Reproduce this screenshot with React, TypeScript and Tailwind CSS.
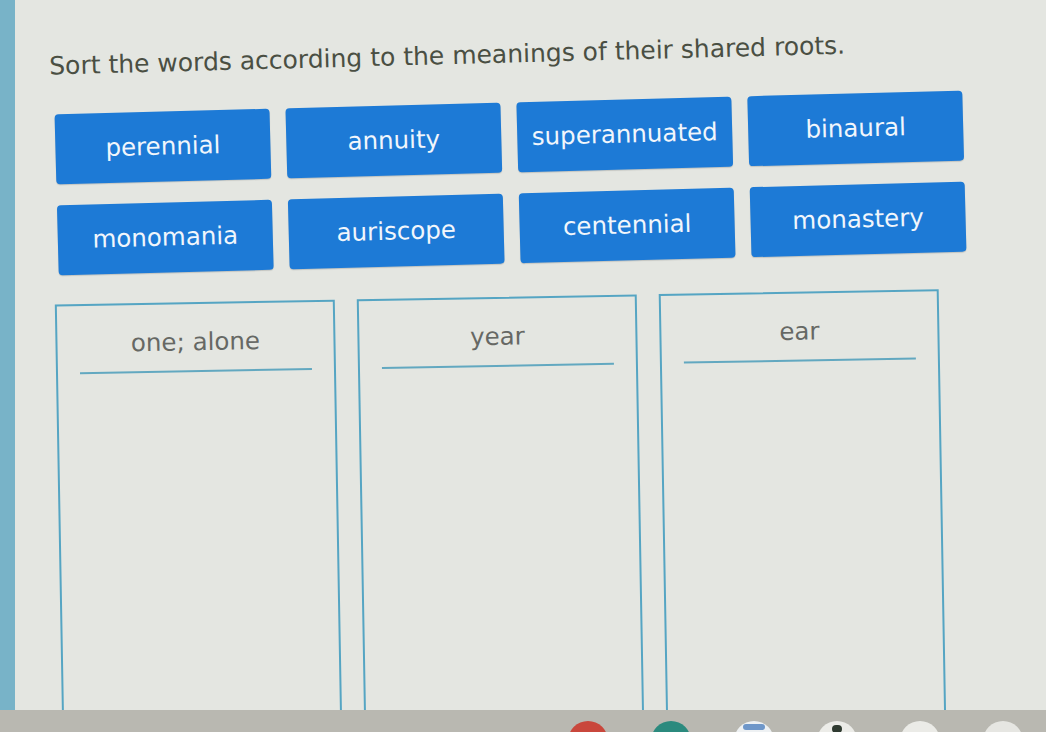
const WORDS = [
  "perennial",
  "annuity",
  "superannuated",
  "binaural",
  "monomania",
  "auriscope",
  "centennial",
  "monastery",
];

const ROOTS = ["one; alone", "year", "ear"];

export default function App() {
  return (
    <div className="flex h-screen flex-col overflow-hidden bg-[#e4e6e1] font-['DejaVu_Sans',Verdana,sans-serif]">
      <div className="flex min-h-0 flex-1 overflow-hidden">
        {/* edge of the browser window */}
        <div className="w-[15px] shrink-0 bg-[#78b3c8]" />

        {/* the photo is taken slightly askew */}
        <main className="flex-1 rotate-[-1.5deg]">
          <h1 className="ml-[42px] mt-[40px] text-[25px] leading-[28px] text-[#4a4f43]">
            Sort the words according to the meanings of their shared roots.
          </h1>

          <div className="ml-[46px] mt-[34px] grid w-[908px] grid-cols-4 gap-x-4 gap-y-[21px]">
            {WORDS.map((word) => (
              <div
                key={word}
                className="flex h-[70px] items-center justify-center rounded-[4px] bg-[#1d7ad6] text-[24.5px] text-[#f1f6fc] shadow-[0_1px_1px_rgba(0,0,0,0.15)]"
              >
                {word}
              </div>
            ))}
          </div>

          {/* perspective: the lower part of the screen leans a bit less */}
          <div className="ml-[39px] mt-[33px] grid w-[884px] rotate-[0.5deg] grid-cols-3 gap-[22px]">
            {ROOTS.map((root) => (
              <section key={root} className="h-[520px] border-2 border-[#55a5c3]">
                <div className="pt-[24px] text-center text-[24.5px] leading-[28px] text-[#666864]">
                  {root}
                </div>
                <div className="mx-[22px] mt-[14px] h-[2px] bg-[#62a8c0]" />
              </section>
            ))}
          </div>
        </main>
      </div>

      {/* monitor bezel with the dock peeking in */}
      <footer className="flex h-[22px] shrink-0 gap-[43px] overflow-hidden bg-[#b9b8b1] pl-[568px] pt-[11px]">
        <div className="h-[40px] w-[40px] shrink-0 rounded-full bg-[#c9473c]" />
        <div className="h-[40px] w-[40px] shrink-0 rounded-full bg-[#2b8a7e]" />
        <div className="flex h-[40px] w-[40px] shrink-0 justify-center rounded-full bg-[#eef1f3] pt-[3px]">
          <div className="h-[6px] w-[22px] rounded-sm bg-[#6f97c9]" />
        </div>
        <div className="flex h-[40px] w-[40px] shrink-0 justify-center rounded-full bg-[#ecece8] pt-[4px]">
          <div className="h-[8px] w-[10px] rounded-sm bg-[#2f3a30]" />
        </div>
        <div className="h-[40px] w-[40px] shrink-0 rounded-full bg-[#ebebe7]" />
        <div className="h-[40px] w-[40px] shrink-0 rounded-full bg-[#e6e6e2]" />
      </footer>
    </div>
  );
}
